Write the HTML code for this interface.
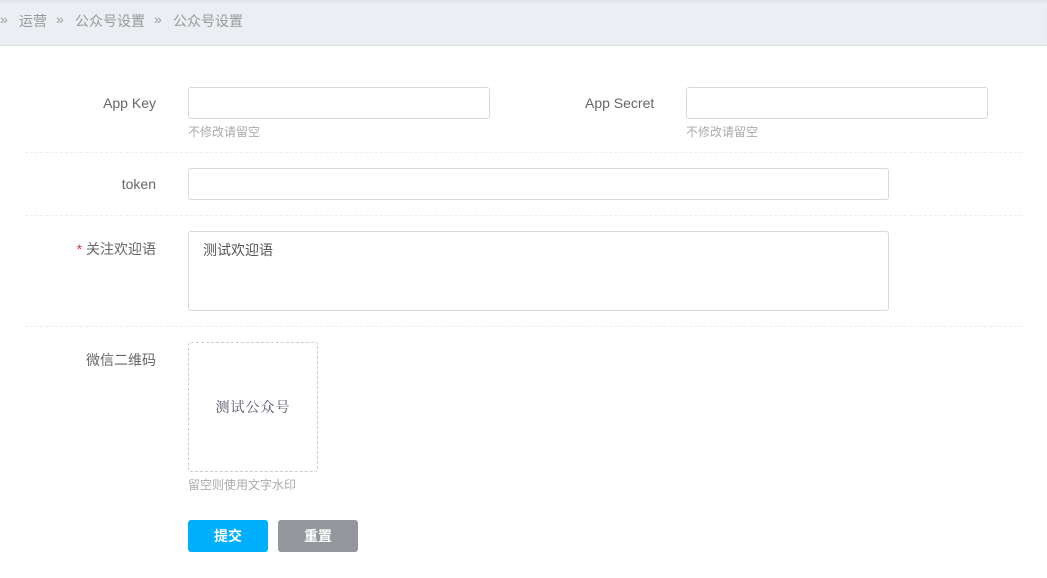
<!DOCTYPE html>
<html><head><meta charset="utf-8"><style>
*{box-sizing:border-box;margin:0;padding:0}
body{width:1047px;height:578px;background:#fff;font-family:"Liberation Sans","Noto Sans CJK SC",sans-serif;font-size:14px;color:#666;position:relative;overflow:hidden}
.bc{position:absolute;left:0;top:0;width:1047px;height:46px;background:#ebeef2;border-bottom:1px solid #dde1e6;box-shadow:inset 0 3px 3px -2px #d8dbe0}
.bc span{position:absolute;top:11px;font-size:14px;color:#999}
.a{position:absolute}
.lbl{position:absolute;text-align:right;width:156px;left:0;font-size:14px;color:#666}
.inp{position:absolute;border:1px solid #d9d9d9;border-radius:3px;background:#fff}
.hint{position:absolute;font-size:12px;color:#aaa}
.hr{position:absolute;left:25px;width:997px;border-top:1px dashed #eee}
.btn{position:absolute;top:520px;height:32px;width:80px;border-radius:3px;color:#fff;font-size:14px;font-weight:bold;text-align:center;line-height:32px}
</style></head><body>
<div class="bc"><span style="left:0">»</span><span style="left:19px">运营</span><span style="left:56px">»</span><span style="left:75px">公众号设置</span><span style="left:154px">»</span><span style="left:173px">公众号设置</span></div>
<div class="lbl" style="top:95px">App Key</div>
<div class="inp" style="left:188px;top:87px;width:302px;height:32px"></div>
<div class="hint" style="left:188px;top:123px">不修改请留空</div>
<div class="a" style="left:585px;top:95px">App Secret</div>
<div class="inp" style="left:686px;top:87px;width:302px;height:32px"></div>
<div class="hint" style="left:686px;top:123px">不修改请留空</div>
<div class="hr" style="top:152px"></div>
<div class="lbl" style="top:176px">token</div>
<div class="inp" style="left:188px;top:168px;width:701px;height:32px"></div>
<div class="hr" style="top:215px"></div>
<div class="lbl" style="top:239px"><span style="color:#e33">* </span>关注欢迎语</div>
<div class="inp" style="left:188px;top:231px;width:701px;height:80px;padding:8px 14px;color:#555">测试欢迎语</div>
<div class="hr" style="top:326px"></div>
<div class="lbl" style="top:350px">微信二维码</div>
<div class="a" style="left:188px;top:342px;width:130px;height:130px;border:1px dashed #ccc;border-radius:3px;text-align:center;line-height:128px;font-family:'Noto Serif CJK SC',serif;color:#556;font-size:14px;letter-spacing:1px">测试公众号</div>
<div class="hint" style="left:188px;top:476px">留空则使用文字水印</div>
<div class="btn" style="left:188px;background:#00b0ff">提交</div>
<div class="btn" style="left:278px;background:#93969c">重置</div>
</body></html>
